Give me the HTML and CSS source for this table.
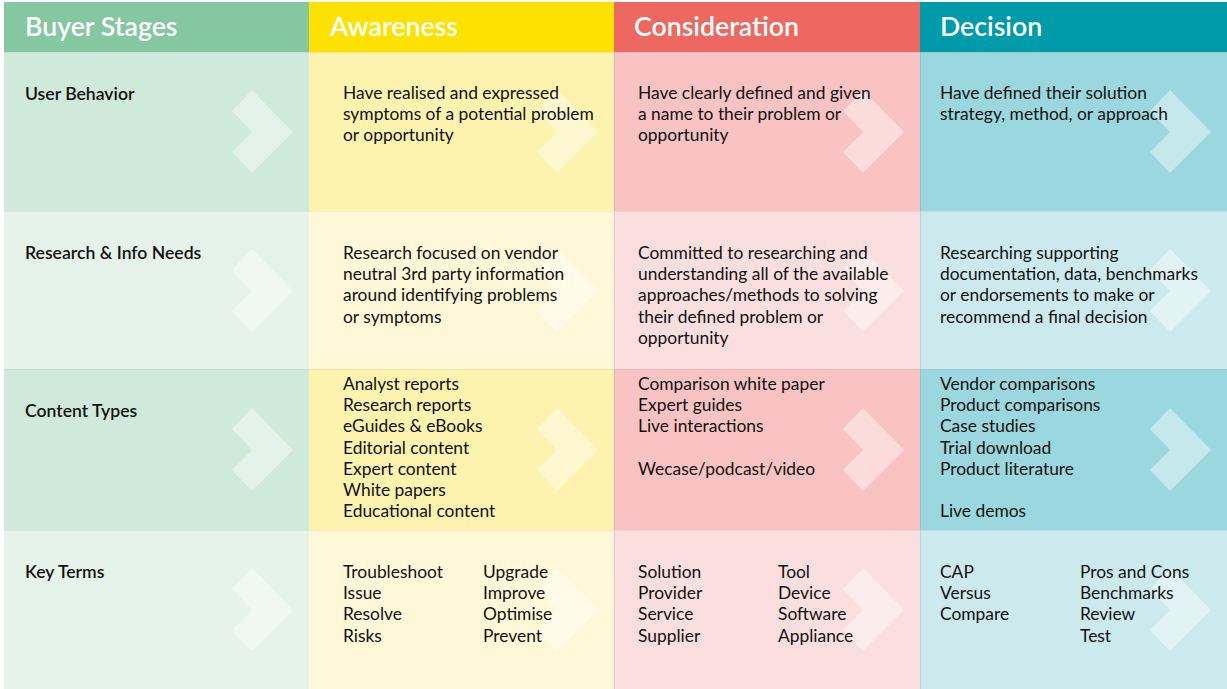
FILE: index.html
```html
<!DOCTYPE html>
<html lang="en">
<head>
<meta charset="utf-8">
<title>Buyer Stages</title>
<link rel="stylesheet" href="styles.css">
</head>
<body>
<div class="matrix">
  <div class="head c1">Buyer Stages</div>
  <div class="head c2">Awareness</div>
  <div class="head c3">Consideration</div>
  <div class="head c4">Decision</div>

  <div class="cell c1 odd label">User Behavior<svg class="chev" viewBox="0 0 61 83"><polygon points="0,21 20,0 61,42 20,83 0,62 20,42"/></svg></div>
  <div class="cell c2 odd">Have realised and expressed<br>symptoms of a potential problem<br>or opportunity<svg class="chev" viewBox="0 0 61 83"><polygon points="0,21 20,0 61,42 20,83 0,62 20,42"/></svg></div>
  <div class="cell c3 odd">Have clearly defined and given<br>a name to their problem or<br>opportunity<svg class="chev" viewBox="0 0 61 83"><polygon points="0,21 20,0 61,42 20,83 0,62 20,42"/></svg></div>
  <div class="cell c4 odd">Have defined their solution<br>strategy, method, or approach<svg class="chev" viewBox="0 0 61 83"><polygon points="0,21 20,0 61,42 20,83 0,62 20,42"/></svg></div>

  <div class="cell c1 even label">Research &amp; Info Needs<svg class="chev" viewBox="0 0 61 83"><polygon points="0,21 20,0 61,42 20,83 0,62 20,42"/></svg></div>
  <div class="cell c2 even">Research focused on vendor<br>neutral 3rd party information<br>around identifying problems<br>or symptoms<svg class="chev" viewBox="0 0 61 83"><polygon points="0,21 20,0 61,42 20,83 0,62 20,42"/></svg></div>
  <div class="cell c3 even">Committed to researching and<br>understanding all of the available<br>approaches/methods to solving<br>their defined problem or<br>opportunity<svg class="chev" viewBox="0 0 61 83"><polygon points="0,21 20,0 61,42 20,83 0,62 20,42"/></svg></div>
  <div class="cell c4 even">Researching supporting<br>documentation, data, benchmarks<br>or endorsements to make or<br>recommend a final decision<svg class="chev" viewBox="0 0 61 83"><polygon points="0,21 20,0 61,42 20,83 0,62 20,42"/></svg></div>

  <div class="cell c1 odd label">Content Types<svg class="chev" viewBox="0 0 61 83"><polygon points="0,21 20,0 61,42 20,83 0,62 20,42"/></svg></div>
  <div class="cell c2 odd tight">Analyst reports<br>Research reports<br>eGuides &amp; eBooks<br>Editorial content<br>Expert content<br>White papers<br>Educational content<svg class="chev" viewBox="0 0 61 83"><polygon points="0,21 20,0 61,42 20,83 0,62 20,42"/></svg></div>
  <div class="cell c3 odd tight">Comparison white paper<br>Expert guides<br>Live interactions<br><br>Wecase/podcast/video<svg class="chev" viewBox="0 0 61 83"><polygon points="0,21 20,0 61,42 20,83 0,62 20,42"/></svg></div>
  <div class="cell c4 odd tight">Vendor comparisons<br>Product comparisons<br>Case studies<br>Trial download<br>Product literature<br><br>Live demos<svg class="chev" viewBox="0 0 61 83"><polygon points="0,21 20,0 61,42 20,83 0,62 20,42"/></svg></div>

  <div class="cell c1 even label">Key Terms<svg class="chev" viewBox="0 0 61 83"><polygon points="0,21 20,0 61,42 20,83 0,62 20,42"/></svg></div>
  <div class="cell c2 even"><div class="terms"><div>Troubleshoot<br>Issue<br>Resolve<br>Risks</div><div>Upgrade<br>Improve<br>Optimise<br>Prevent</div></div><svg class="chev" viewBox="0 0 61 83"><polygon points="0,21 20,0 61,42 20,83 0,62 20,42"/></svg></div>
  <div class="cell c3 even"><div class="terms"><div>Solution<br>Provider<br>Service<br>Supplier</div><div>Tool<br>Device<br>Software<br>Appliance</div></div><svg class="chev" viewBox="0 0 61 83"><polygon points="0,21 20,0 61,42 20,83 0,62 20,42"/></svg></div>
  <div class="cell c4 even"><div class="terms"><div>CAP<br>Versus<br>Compare</div><div>Pros and Cons<br>Benchmarks<br>Review<br>Test</div></div><svg class="chev" viewBox="0 0 61 83"><polygon points="0,21 20,0 61,42 20,83 0,62 20,42"/></svg></div>
</div>
</body>
</html>
```

FILE: styles.css
```css
* { box-sizing: border-box; }
html, body { margin: 0; padding: 0; background: #ffffff; }
body {
  padding: 2px 0 0 4px;
  font-family: "Lato", "Liberation Sans", sans-serif;
  color: #111111;
  overflow: hidden;
}
.matrix {
  display: grid;
  grid-template-columns: 305px 305px 306px 307px;
  grid-template-rows: 50px 159px 158px 161px 159px;
}
.head {
  display: flex;
  align-items: center;
  padding-left: 21px;
  padding-bottom: 3px;
  color: #ffffff;
  font-size: 26.7px;
  font-weight: 600;
}
.head.c1 { background: #84c7a1; }
.head.c2 { background: #fde100; padding-left: 21px; }
.head.c3 { background: #ee6862; padding-left: 20px; }
.head.c4 { background: #009baa; padding-left: 20px; }

.cell {
  position: relative;
  z-index: 0;
  padding-top: 29px;
  font-size: 17.4px;
  line-height: 21.2px;
  border-top: 1px solid rgba(0, 0, 0, 0.05);
  overflow: hidden;
}
.cell.tight { padding-top: 3px; }
.cell.label { font-weight: 600; padding-left: 21px; font-size: 17.6px; padding-top: 30px; }
.cell.c2 { padding-left: 34px; }
.cell.c3 { padding-left: 23px; border-left: 1px solid rgba(210, 90, 60, 0.18); }
.cell.c4 { padding-left: 19px; border-left: 1px solid rgba(0, 80, 90, 0.12); }
.cell.c2.even, .cell.c3.even, .cell.c4.even { padding-top: 30px; }
.cell.c2.tight, .cell.c3.tight, .cell.c4.tight { padding-top: 3px; }

.c1.odd { background: #cfe9db; }
.c1.even { background: #e6f3ea; }
.c2.odd { background: #fef2af; }
.c2.even { background: #fff8d8; }
.c3.odd { background: #f8c3c2; }
.c3.even { background: #fbdede; }
.c4.odd { background: #9ad7df; }
.c4.even { background: #cceaee; }

.chev {
  position: absolute;
  z-index: -1;
  right: 16px;
  top: 50%;
  width: 61px;
  height: 83px;
  margin-top: -42px;
  fill: rgba(255, 255, 255, 0.42);
  pointer-events: none;
}

.terms {
  display: grid;
  grid-template-columns: 140px auto;
}
```
